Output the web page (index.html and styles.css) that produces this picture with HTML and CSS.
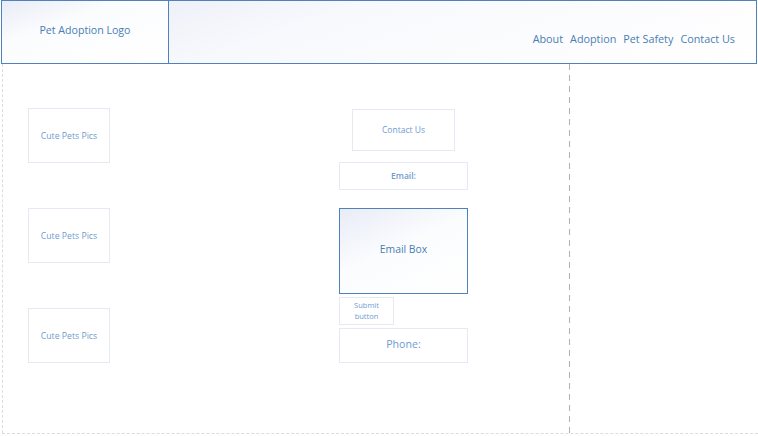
FILE: index.html
```html
<!DOCTYPE html>
<html lang="en">
<head>
  <meta charset="UTF-8">
  <title>Pet Adoption</title>
  <meta name="viewport" content="width=device-width, initial-scale=1.0">
  <link rel="stylesheet" href="styles.css">
</head>
<body>
  <header class="top">
    <div class="logo">Pet Adoption Logo</div>
    <nav class="nav">
      <a href="#">About</a>
      <a href="#">Adoption</a>
      <a href="#">Pet Safety</a>
      <a href="#">Contact Us</a>
    </nav>
  </header>

  <main class="page">
    <section class="content">
      <div class="pics">
        <div class="pic">Cute Pets Pics</div>
        <div class="pic">Cute Pets Pics</div>
        <div class="pic">Cute Pets Pics</div>
      </div>
      <div class="form">
        <div class="box contact">Contact Us</div>
        <div class="box email">Email:</div>
        <div class="box emailbox">Email Box</div>
        <div class="box submit">Submit<br>button</div>
        <div class="box phone">Phone:</div>
      </div>
    </section>
    <aside class="side"></aside>
  </main>
</body>
</html>
```

FILE: styles.css
```css
body {
  margin: 0;
  font-family: 'Open Sans', 'Noto Sans', sans-serif;
  background: #fff;
  color: #4a7db4;
}
.top {
  display: flex;
  width: 756px;
  height: 64px;
  margin-left: 1px;
  box-sizing: border-box;
  border: 1px solid #4f81bd;
  background: linear-gradient(160deg, #e6eaf5 0%, #f8f9fd 40%, #ffffff 100%);
}
.logo {
  width: 167px;
  flex: none;
  display: flex;
  align-items: center;
  justify-content: center;
  font-size: 10.6px;
  padding-bottom: 4px;
  box-sizing: border-box;
  border-right: 1px solid #4f81bd;
  background: linear-gradient(160deg, #e8ecf6 0%, #fbfcfe 35%, #ffffff 100%);
}
.nav {
  flex: 1;
  display: flex;
  justify-content: flex-end;
  align-items: flex-end;
  gap: 7px;
  padding: 0 21px 17px 0;
}
.nav a {
  color: #4a7db4;
  text-decoration: none;
  font-size: 10.8px;
}
.page {
  display: flex;
  margin-left: 2px;
  height: 370px;
  box-sizing: border-box;
  border-bottom: 1px dashed #dcdcdc;
}
.content {
  width: 568px;
  flex: none;
  display: flex;
  gap: 229px;
  box-sizing: border-box;
  border-left: 1px dashed #dcdcdc;
  padding-left: 25px;
  background: repeating-linear-gradient(to bottom, #b0b0b0 0 6px, transparent 6px 11px) right top / 1px 100% no-repeat;
}
.pics {
  display: flex;
  flex-direction: column;
  gap: 45px;
  padding-top: 44px;
}
.pic, .box {
  box-sizing: border-box;
  border: 1px solid #e6e9f2;
  display: flex;
  align-items: center;
  justify-content: center;
  text-align: center;
  color: #6f9bd0;
}
.pic {
  width: 82px;
  height: 55px;
  font-size: 8.7px;
}
.form {
  width: 129px;
  display: flex;
  flex-direction: column;
  align-items: flex-start;
  padding-top: 45px;
}
.contact {
  width: 103px;
  height: 42px;
  margin-left: 13px;
  font-size: 8.5px;
  padding-bottom: 2px;
}
.email {
  width: 129px;
  height: 28px;
  margin-top: 11px;
  font-size: 8.5px;
  font-weight: 600;
  padding-bottom: 2px;
}
.emailbox {
  width: 129px;
  height: 86px;
  margin-top: 18px;
  border-color: #4f81bd;
  color: #4a7db4;
  font-size: 10.4px;
  padding-bottom: 4px;
  background: linear-gradient(155deg, #e8ecf6 0%, #fbfcfe 45%, #ffffff 100%);
}
.submit {
  width: 55px;
  height: 28px;
  margin-top: 3px;
  font-size: 7.5px;
  line-height: 11px;
}
.phone {
  width: 129px;
  height: 35px;
  margin-top: 3px;
  font-size: 10.6px;
  padding-bottom: 4px;
}
.side {
  flex: 1;
}
```
